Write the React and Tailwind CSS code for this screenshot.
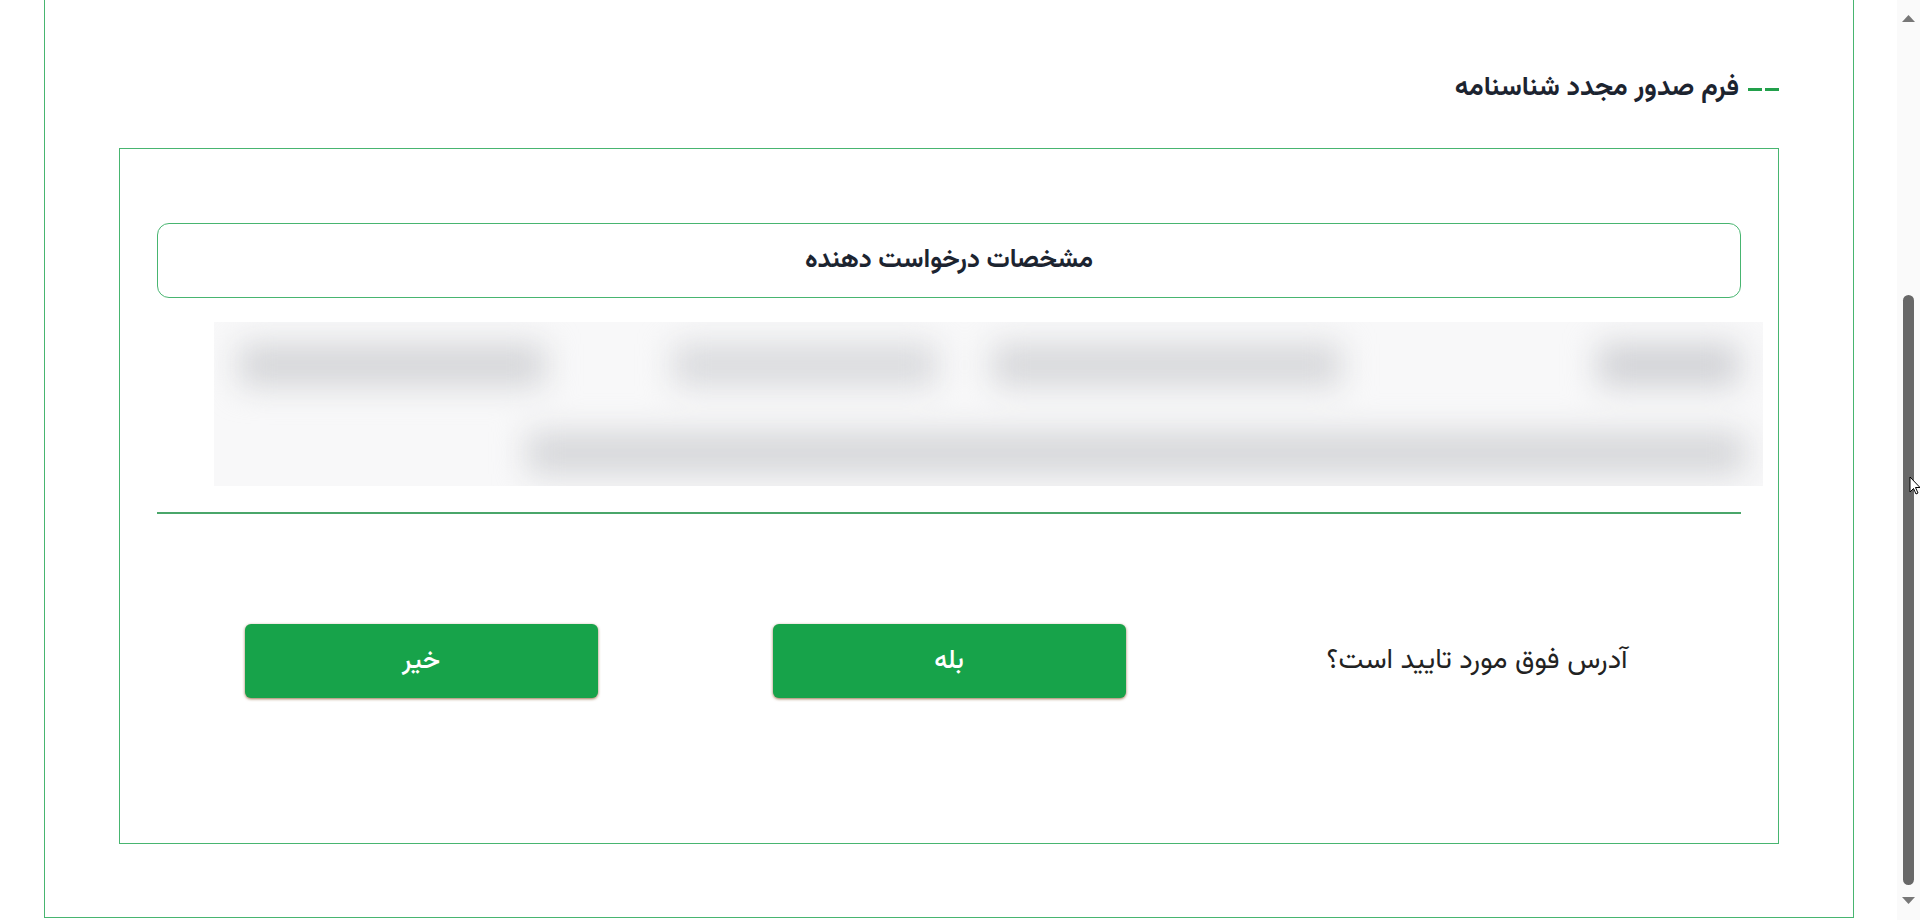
export default function App() {
  return (
    <div className="relative flex h-[920px] w-full overflow-hidden bg-white font-['Vazirmatn','Noto_Sans_Arabic','DejaVu_Sans',sans-serif] text-[#1c2430]">
      <div className="flex-1 pl-[44px] pr-[43px]">
        <div dir="rtl" className="h-[918px] border-x border-b border-[#48b570] px-[74px]">
          <div className="flex h-[102px] items-center gap-[9px] pt-[76px]">
            <div className="flex gap-[3px]">
              <div className="h-[3px] w-[14px] bg-[#22a04b]" />
              <div className="h-[3px] w-[14px] bg-[#22a04b]" />
            </div>
            <span className="text-[27px] font-bold leading-[26px]">فرم صدور مجدد شناسنامه</span>
          </div>
          <div className="mt-[46px] border border-[#48b570] px-[37px] pb-[145px] pt-[74px]">
            <div className="flex h-[75px] items-center justify-center rounded-[12px] border border-[#48b570]">
              <span className="text-[26px] font-bold">مشخصات درخواست دهنده</span>
            </div>
            <div className="ml-[57px] mr-[-22px] mt-[24px] h-[164px] overflow-hidden bg-[#f8f8f9]">
              <div className="flex h-full flex-col blur-[16px]">
                <div className="mt-[22px] flex h-[42px]">
                  <div className="mr-[24px] h-full w-[141px] bg-[#d0d1d5]" />
                  <div className="mr-[257px] h-full w-[349px] bg-[#d6d7da]" />
                  <div className="mr-[55px] h-full w-[264px] bg-[#d9dadd]" />
                  <div className="mr-[128px] h-full w-[306px] bg-[#d4d5d8]" />
                </div>
                <div className="mt-[46px] flex h-[42px]">
                  <div className="mr-[18px] h-full w-[1218px] bg-[#d5d6d9]" />
                </div>
              </div>
            </div>
            <div className="mt-[26px] h-[2px] bg-[#4aa66a]" />
            <div className="mt-[110px] grid grid-cols-3 items-center">
              <div className="flex justify-center">
                <span className="text-[28px] leading-[30px] text-[#222]">آدرس فوق مورد تایید است؟</span>
              </div>
              <div className="flex justify-center">
                <button className="flex h-[74px] w-[353px] items-center justify-center rounded-[6px] bg-[#17a34a] text-[26px] font-medium text-white shadow-[0_1px_3px_rgba(120,70,20,0.75)]">
                  بله
                </button>
              </div>
              <div className="flex justify-center">
                <button className="flex h-[74px] w-[353px] items-center justify-center rounded-[6px] bg-[#17a34a] text-[26px] font-medium text-white shadow-[0_1px_3px_rgba(120,70,20,0.75)]">
                  خیر
                </button>
              </div>
            </div>
          </div>
        </div>
      </div>
      <div className="flex w-[23px] flex-col items-center bg-[#fafafa]">
        <svg className="mt-[15px]" width="13" height="7" viewBox="0 0 13 7">
          <path d="M6.5 0 L13 7 L0 7 Z" fill="#777" />
        </svg>
        <div className="mt-[273px] h-[590px] w-[11px] rounded-full bg-[#686868]" />
        <svg className="mt-[12px]" width="13" height="7" viewBox="0 0 13 7">
          <path d="M0 0 L13 0 L6.5 7 Z" fill="#777" />
        </svg>
      </div>
      <svg className="absolute left-[1909px] top-[476px]" width="12" height="20" viewBox="0 0 12 20">
        <path d="M1 1 L1 16 L4.5 12.5 L7 18 L9 17 L6.5 11.5 L11 11.5 Z" fill="#fff" stroke="#000" strokeWidth="1" />
      </svg>
    </div>
  );
}
